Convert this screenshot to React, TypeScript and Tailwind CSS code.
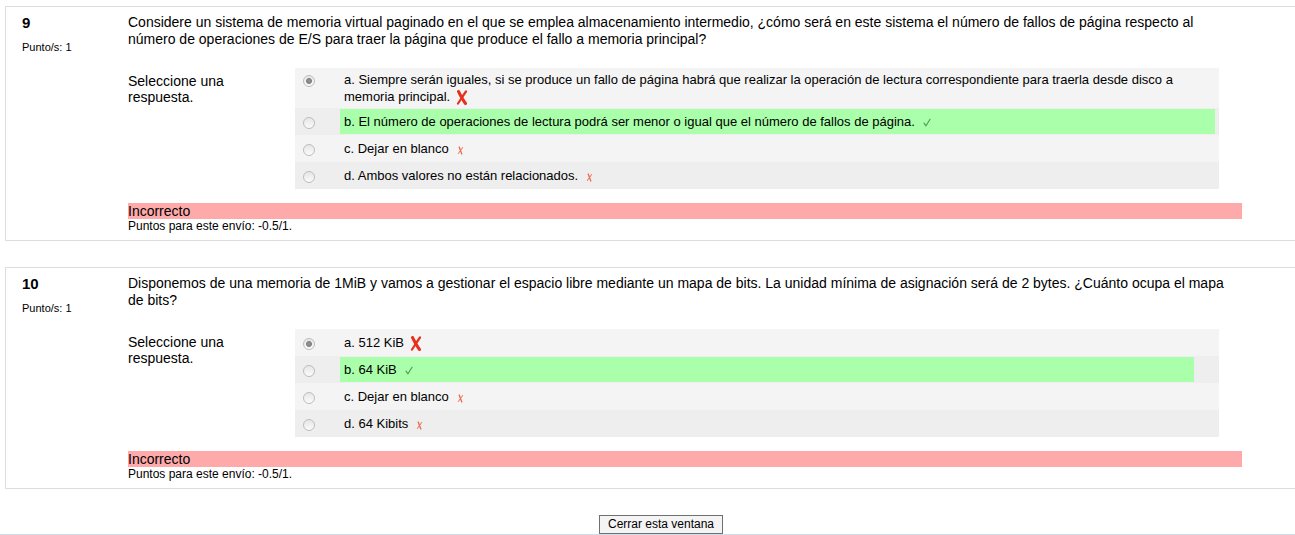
import React from "react";

type Answer = { text: string; mark: "big" | "small" | "check"; selected?: boolean; correct?: boolean };

type Question = {
  num: string;
  text: string;
  answers: Answer[];
  greenRight: string;
};

const questions: Question[] = [
  {
    num: "9",
    text: "Considere un sistema de memoria virtual paginado en el que se emplea almacenamiento intermedio, ¿cómo será en este sistema el número de fallos de página respecto al número de operaciones de E/S para traer la página que produce el fallo a memoria principal?",
    greenRight: "mr-[4px]",
    answers: [
      { text: "a. Siempre serán iguales, si se produce un fallo de página habrá que realizar la operación de lectura correspondiente para traerla desde disco a memoria principal.", mark: "big", selected: true },
      { text: "b. El número de operaciones de lectura podrá ser menor o igual que el número de fallos de página.", mark: "check", correct: true },
      { text: "c. Dejar en blanco", mark: "small" },
      { text: "d. Ambos valores no están relacionados.", mark: "small" },
    ],
  },
  {
    num: "10",
    text: "Disponemos de una memoria de 1MiB y vamos a gestionar el espacio libre mediante un mapa de bits. La unidad mínima de asignación será de 2 bytes. ¿Cuánto ocupa el mapa de bits?",
    greenRight: "mr-[25px]",
    answers: [
      { text: "a. 512 KiB", mark: "big", selected: true },
      { text: "b. 64 KiB", mark: "check", correct: true },
      { text: "c. Dejar en blanco", mark: "small" },
      { text: "d. 64 Kibits", mark: "small" },
    ],
  },
];

function BigX() {
  return (
    <svg width="12" height="15" viewBox="0 0 12 15" className="inline-block align-[-4px] ml-[6px]">
      <path d="M2.5 1.5 C4.5 5.5 6.5 9.5 9.5 13.5" stroke="#e5311d" strokeWidth="3" fill="none" strokeLinecap="round" />
      <path d="M10 1.5 C7.5 5 5 9 2 13.5" stroke="#e5311d" strokeWidth="2.2" fill="none" strokeLinecap="round" />
    </svg>
  );
}

function SmallX() {
  return (
    <svg width="7" height="9" viewBox="0 0 7 9" className="inline-block align-[-2px] ml-[8px]">
      <path d="M2.2 1 L4.8 8" stroke="#f0684a" strokeWidth="1.3" fill="none" strokeLinecap="round" />
      <path d="M5.6 1.5 L1.4 7.5" stroke="#f0684a" strokeWidth="1" fill="none" strokeLinecap="round" />
    </svg>
  );
}

function Check() {
  return (
    <svg width="8" height="9" viewBox="0 0 8 9" className="inline-block align-[-1px] ml-[8px]">
      <path d="M1 5.2 L3 7.8 L7 1.2" stroke="#4a9e4a" strokeWidth="1.1" fill="none" strokeLinecap="round" strokeLinejoin="round" />
    </svg>
  );
}

function Radio({ checked }: { checked?: boolean }) {
  return (
    <div className="w-[12px] h-[12px] rounded-full border border-[#bdbdbd] bg-gradient-to-b from-[#e6e6e6] to-[#fbfbfb] flex items-center justify-center">
      {checked && <div className="w-[6px] h-[6px] rounded-full bg-[#909090] border border-[#777]" />}
    </div>
  );
}

function QuestionCard({ q }: { q: Question }) {
  return (
    <div className="ml-[5px] w-[1312px] border border-[#dddddd] flex pt-[7px] pb-[7px]">
      <div className="w-[122px] pl-[16px] shrink-0">
        <div className="text-[15px] font-bold leading-[17px]">{q.num}</div>
        <div className="text-[11px] leading-[12px] mt-[10px]">Punto/s: 1</div>
      </div>
      <div className="w-[1114px] shrink-0">
        <div className="text-[14px] leading-[17px]">{q.text}</div>
        <div className="flex mt-[20px]">
          <div className="w-[167px] shrink-0 pr-[30px] text-[14px] leading-[16px] pt-[5px]">Seleccione una respuesta.</div>
          <div className="w-[924px] shrink-0">
            {q.answers.map((a, i) => (
              <div
                key={i}
                className={`flex items-start py-[1px] ${i % 2 === 0 ? "bg-[#f4f4f4]" : "bg-[#eeeeee]"}`}
              >
                <div className={`w-[45px] shrink-0 pl-[8px] ${a.text.length > 120 ? "pt-[6px]" : "pt-[8px]"}`}>
                  <Radio checked={a.selected} />
                </div>
                <div
                  className={`flex-1 px-[4px] text-[13px] leading-[17px] ${
                    a.text.length > 120 ? "py-[2px]" : "py-[4px]"
                  } ${a.correct ? `bg-[#aaffaa] ${q.greenRight}` : "mr-[4px]"}`}
                >
                  {a.text}
                  {a.mark === "big" && <BigX />}
                  {a.mark === "small" && <SmallX />}
                  {a.mark === "check" && <Check />}
                </div>
              </div>
            ))}
          </div>
        </div>
        <div className="mt-[14px] bg-[#ffaaaa] text-[14px] leading-[16px]">Incorrecto</div>
        <div className="text-[12px] leading-[13px] mt-[1px]">Puntos para este envío: -0.5/1.</div>
      </div>
    </div>
  );
}

export default function App() {
  return (
    <div className="w-full overflow-hidden bg-white text-black" style={{ fontFamily: '"Liberation Sans", Arial, sans-serif' }}>
      <div className="w-[1322px] pt-[6px]">
        <QuestionCard q={questions[0]} />
        <div className="h-[26px]" />
        <QuestionCard q={questions[1]} />
        <div className="flex justify-center pt-[26px]">
          <button className="h-[19px] px-[8px] border border-[#707070] bg-[#f4f4f4] text-[12px] leading-[15px] rounded-none">
            Cerrar esta ventana
          </button>
        </div>
        <div className="border-t border-[#d3dde8]" />
      </div>
    </div>
  );
}
